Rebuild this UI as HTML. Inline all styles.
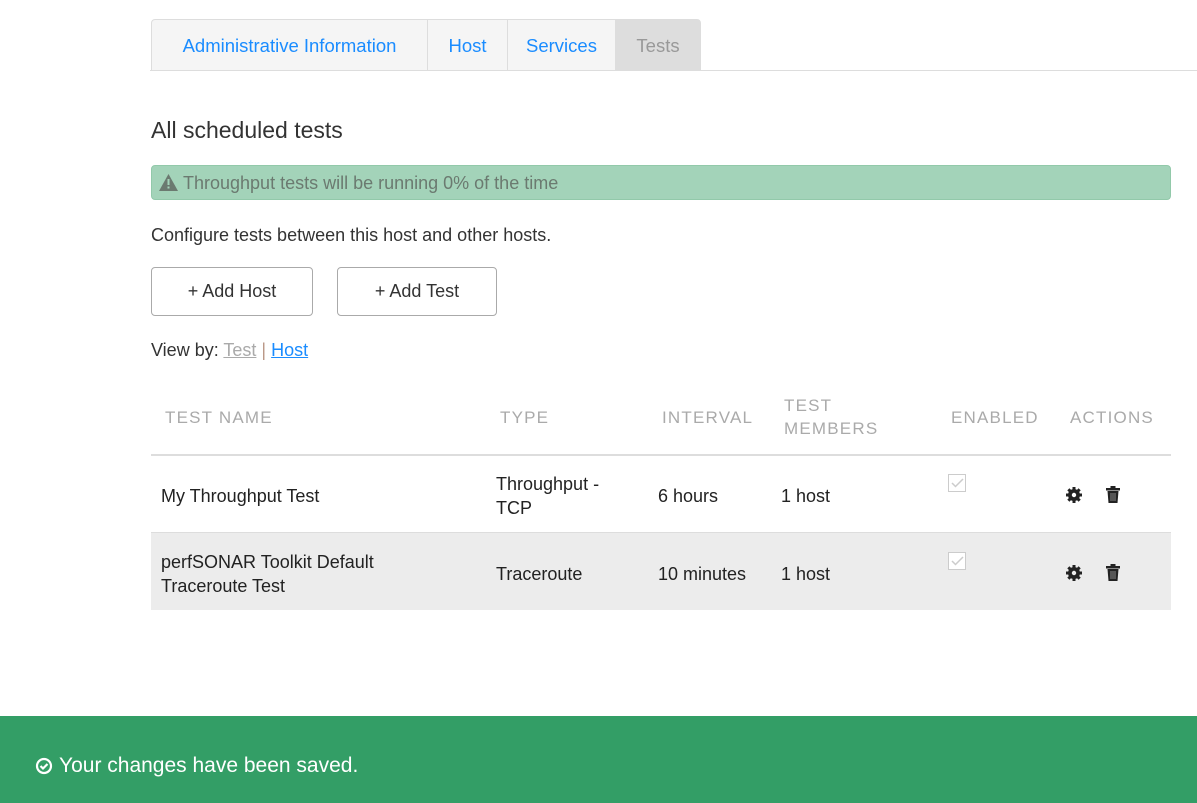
<!DOCTYPE html>
<html><head><meta charset="utf-8"><style>
*{margin:0;padding:0;box-sizing:border-box}
body{width:1197px;height:803px;background:#fff;font-family:"Liberation Sans",sans-serif;color:#333;position:relative;overflow:hidden}
.a{position:absolute;white-space:nowrap}
.tab{position:absolute;top:19px;height:52px;border:1px solid #ddd;background:#f5f5f5;color:#1a8cff;font-size:18.5px;line-height:52px;text-align:center}
.btn{position:absolute;top:267px;height:49px;border:1px solid #aaa;border-radius:4px;font-size:18px;line-height:47px;text-align:center;color:#333}
.th{position:absolute;font-size:17px;color:#aaa;letter-spacing:1.2px;line-height:23px}
.td{position:absolute;font-size:18px;color:#222;line-height:24px}
.cb{position:absolute;width:18px;height:18px;border:1px solid #ccc;background:#fff}
</style></head><body>
<div class="a" style="left:150px;top:70px;width:1047px;height:1px;background:#ddd"></div>
<div class="tab" style="left:151px;width:277px;border-radius:4px 0 0 0">Administrative Information</div>
<div class="tab" style="left:427px;width:81px">Host</div>
<div class="tab" style="left:507px;width:109px">Services</div>
<div class="tab" style="left:615px;width:86px;background:#ddd;color:#999;border-color:#ddd;border-radius:0 4px 0 0">Tests</div>

<div class="a" style="left:151px;top:117px;font-size:23px;color:#333">All scheduled tests</div>
<div class="a" style="left:151px;top:165px;width:1020px;height:35px;background:#a3d3b9;border-radius:4px;border:1px solid #92c9aa"></div>
<svg class="a" style="left:159px;top:174px" width="19" height="17" viewBox="0 0 19 17"><path d="M9.5 0L19 17H0Z" fill="#6b7a70"/><rect x="8.5" y="5" width="2" height="6" fill="#a3d3b9"/><rect x="8.5" y="12.5" width="2" height="2" fill="#a3d3b9"/></svg>
<div class="a" style="left:183px;top:173px;font-size:18px;color:#6b7a70">Throughput tests will be running 0% of the time</div>

<div class="a" style="left:151px;top:225px;font-size:18px;color:#333">Configure tests between this host and other hosts.</div>
<div class="btn" style="left:151px;width:162px">+ Add Host</div>
<div class="btn" style="left:337px;width:160px">+ Add Test</div>
<div class="a" style="left:151px;top:340px;font-size:18px;color:#333">View by: <span style="color:#aaa;text-decoration:underline">Test</span> <span style="color:#b98">|</span> <span style="color:#1a8cff;text-decoration:underline">Host</span></div>

<div class="th" style="left:165px;top:406px">TEST NAME</div>
<div class="th" style="left:500px;top:406px">TYPE</div>
<div class="th" style="left:662px;top:406px">INTERVAL</div>
<div class="th" style="left:784px;top:394px">TEST<br>MEMBERS</div>
<div class="th" style="left:951px;top:406px">ENABLED</div>
<div class="th" style="left:1070px;top:406px">ACTIONS</div>
<div class="a" style="left:151px;top:454px;width:1020px;height:2px;background:#ddd"></div>

<div class="td" style="left:161px;top:484px">My Throughput Test</div>
<div class="td" style="left:496px;top:472px">Throughput -<br>TCP</div>
<div class="td" style="left:658px;top:484px">6 hours</div>
<div class="td" style="left:781px;top:484px">1 host</div>
<div class="cb" style="left:948px;top:474px"><svg width="16" height="16"><path d="M3 8l3.5 3.5L14 4" stroke="#ccc" stroke-width="1.5" fill="none"/></svg></div>

<div class="a" style="left:151px;top:532px;width:1020px;height:78px;background:#ececec;border-top:1px solid #ddd"></div>
<div class="td" style="left:161px;top:550px">perfSONAR Toolkit Default<br>Traceroute Test</div>
<div class="td" style="left:496px;top:562px">Traceroute</div>
<div class="td" style="left:658px;top:562px">10 minutes</div>
<div class="td" style="left:781px;top:562px">1 host</div>
<div class="cb" style="left:948px;top:552px"><svg width="16" height="16"><path d="M3 8l3.5 3.5L14 4" stroke="#ccc" stroke-width="1.5" fill="none"/></svg></div>

<svg class="a" style="left:1065px;top:486px" width="18" height="18" viewBox="0 0 18 18"><g fill="#222"><circle cx="9" cy="9" r="6"/><rect x="7.5" y="1" width="3" height="16"/><rect x="1" y="7.5" width="16" height="3"/><rect x="7.5" y="1" width="3" height="16" transform="rotate(45 9 9)"/><rect x="7.5" y="1" width="3" height="16" transform="rotate(-45 9 9)"/></g><circle cx="9" cy="9" r="2.2" fill="#fff"/></svg>
<svg class="a" style="left:1065px;top:564px" width="18" height="18" viewBox="0 0 18 18"><g fill="#222"><circle cx="9" cy="9" r="6"/><rect x="7.5" y="1" width="3" height="16"/><rect x="1" y="7.5" width="16" height="3"/><rect x="7.5" y="1" width="3" height="16" transform="rotate(45 9 9)"/><rect x="7.5" y="1" width="3" height="16" transform="rotate(-45 9 9)"/></g><circle cx="9" cy="9" r="2.2" fill="#ececec"/></svg>
<svg class="a" style="left:1105px;top:486px" width="16" height="18" viewBox="0 0 16 18"><g fill="#222"><rect x="1" y="2" width="14" height="2.5"/><rect x="5.5" y="0" width="5" height="3"/><path d="M2.5 5h11l-1 12h-9z"/></g><g stroke="#888" stroke-width="1"><line x1="6" y1="7" x2="6" y2="15"/><line x1="8" y1="7" x2="8" y2="15"/><line x1="10" y1="7" x2="10" y2="15"/></g></svg>
<svg class="a" style="left:1105px;top:564px" width="16" height="18" viewBox="0 0 16 18"><g fill="#222"><rect x="1" y="2" width="14" height="2.5"/><rect x="5.5" y="0" width="5" height="3"/><path d="M2.5 5h11l-1 12h-9z"/></g><g stroke="#888" stroke-width="1"><line x1="6" y1="7" x2="6" y2="15"/><line x1="8" y1="7" x2="8" y2="15"/><line x1="10" y1="7" x2="10" y2="15"/></g></svg>

<div class="a" style="left:0;top:716px;width:1197px;height:87px;background:#339e66"></div>
<svg class="a" style="left:35px;top:757px" width="18" height="18" viewBox="0 0 18 18"><circle cx="9" cy="9" r="7" stroke="#fff" stroke-width="2.2" fill="none"/><path d="M5.5 9l2.5 2.5 4.5-4.5" stroke="#fff" stroke-width="2.2" fill="none"/></svg>
<div class="a" style="left:59px;top:754px;font-size:21px;color:#fff">Your changes have been saved.</div>
</body></html>
